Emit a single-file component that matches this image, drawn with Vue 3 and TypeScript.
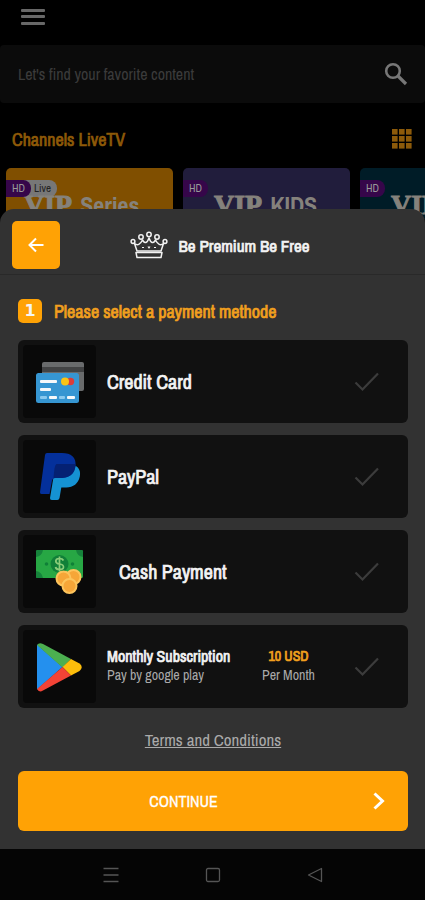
<script setup lang="ts">
import { ref } from 'vue'

type Icon = 'card' | 'paypal' | 'cash' | 'play'

interface Method {
  id: Icon
  title: string
  note?: string
  price?: string
  period?: string
}

interface Channel {
  name: string
  tone: string
  live: boolean
}

const methods: Method[] = [
  { id: 'card', title: 'Credit Card' },
  { id: 'paypal', title: 'PayPal' },
  { id: 'cash', title: 'Cash Payment' },
  {
    id: 'play',
    title: 'Monthly Subscription',
    note: 'Pay by google play',
    price: '10 USD',
    period: 'Per Month',
  },
]

const channels: Channel[] = [
  { name: 'Series', tone: 'amber', live: true },
  { name: 'KIDS', tone: 'violet', live: false },
  { name: '', tone: 'teal', live: false },
]

const selected = ref<Icon | ''>('')
const query = ref('')
</script>

<template>
  <div class="screen">
    <header class="topbar">
      <button class="bare" type="button" aria-label="Menu">
        <svg width="24" height="18" viewBox="0 0 24 18" fill="#686868">
          <rect y="1" width="24" height="3" rx="1" />
          <rect y="7" width="24" height="3" rx="1" />
          <rect y="14" width="24" height="3" rx="1" />
        </svg>
      </button>
    </header>

    <form class="search" @submit.prevent>
      <input v-model="query" type="text" aria-label="Search content" placeholder="Let's find your favorite content" />
      <button class="bare" type="submit" aria-label="Search">
        <svg width="24" height="24" viewBox="0 0 24 24" fill="none" stroke="#777" stroke-width="2.6">
          <circle cx="9" cy="9" r="6.8" />
          <path d="M14 14l8 8" stroke-width="3.2" />
        </svg>
      </button>
    </form>

    <div class="section">
      <h2>Channels LiveTV</h2>
      <button class="bare" type="button" aria-label="Show all channels">
        <svg width="20" height="20" viewBox="0 0 20 20" fill="#8c5a0a">
          <template v-for="r in 3" :key="r">
            <rect v-for="c in 3" :key="c" :x="(c - 1) * 7" :y="(r - 1) * 7" width="5.6" height="5.6" />
          </template>
        </svg>
      </button>
    </div>

    <div class="channels">
      <article v-for="c in channels" :key="c.tone" class="channel" :class="c.tone">
        <div class="tags">
          <span class="hd">HD</span>
          <span v-if="c.live" class="live">Live</span>
        </div>
        <p class="channel-name"><span class="vip">VIP</span><span>{{ c.name }}</span></p>
      </article>
    </div>

    <main class="sheet">
      <div class="sheet-head">
        <button class="back" type="button" aria-label="Back">
          <svg width="18" height="16" viewBox="0 0 18 16" fill="none" stroke="#fff" stroke-width="2">
            <path d="M16.5 8H2.5M9 1.5L2.5 8L9 14.5" />
          </svg>
        </button>
        <div class="premium">
          <svg width="38" height="28" viewBox="0 0 38 28" fill="none" stroke="#f2f2f2" stroke-width="1.5" stroke-linejoin="round">
            <path d="M7 20L4.5 12.5Q9 16 12.5 9Q16 15 19 7Q22 15 25.5 9Q29 16 33.5 12.5L31 20Z" />
            <path d="M6 21.5H32L31 26.5H7Z" />
            <circle cx="3" cy="10.5" r="1.9" />
            <circle cx="11" cy="6" r="2.2" />
            <circle cx="19" cy="3.5" r="2.2" />
            <circle cx="27" cy="6" r="2.2" />
            <circle cx="35" cy="10.5" r="1.9" />
            <path d="M12 16.5h2M18 15.5l1 1.5l1-1.5M24 16.5h2" stroke-width="1.2" />
          </svg>
          <h1>Be Premium Be Free</h1>
        </div>
      </div>

      <form class="payment" @submit.prevent>
        <div class="step">
          <span class="badge">1</span>
          <h2 id="pay-title">Please select a payment methode</h2>
        </div>

        <div class="methods" role="radiogroup" aria-labelledby="pay-title">
          <label v-for="m in methods" :key="m.id" class="method" :class="m.id">
            <input v-model="selected" class="choice" type="radio" name="method" :value="m.id" />
            <span class="picture">
              <svg v-if="m.id === 'card'" width="50" height="50" viewBox="0 0 50 50">
                <rect x="7" y="5" width="42" height="29" rx="2" fill="#696b6c" />
                <rect x="7" y="10" width="42" height="5" fill="#424344" />
                <rect x="1" y="16" width="43" height="30" rx="2.5" fill="#3696d2" />
                <g fill="#f5f8fa">
                  <rect x="5" y="23" width="17" height="3" rx="1" />
                  <rect x="5" y="31" width="11" height="3" rx="1" />
                  <rect x="14" y="39" width="8" height="3" rx="1" />
                  <rect x="32" y="39" width="8" height="3" rx="1" />
                </g>
                <g fill="#8ac9ee">
                  <rect x="5" y="39" width="7" height="3" rx="1" />
                  <rect x="24" y="39" width="6" height="3" rx="1" />
                </g>
                <circle cx="35.5" cy="24.5" r="3.7" fill="#dc3c38" />
                <circle cx="30" cy="24.5" r="4" fill="#fac415" />
              </svg>
              <svg v-else-if="m.id === 'paypal'" width="50" height="50" viewBox="0 0 50 50">
                <path d="M18.5 25L15 46q-.2 2 1.8 2h5.5q1.8 0 2.2-2l1.8-10.5h5c7 0 12-4 13.5-11c1-5-.5-8.5-4-10.5z" fill="#1592d3" />
                <path d="M12 1H27c9 0 14.5 4.5 13.5 12.5C39.5 22 34 26 26 26H20q-2.5 0-3 2.5L14.5 42H6.5Q4.7 42 5 40L10 3q.3-2 2-2z" fill="#04309b" />
                <path d="M21.5 12H40.5q0 13-13.5 14H18.5q1-14 3-14z" fill="#052173" />
              </svg>
              <svg v-else-if="m.id === 'cash'" width="50" height="50" viewBox="0 0 50 50">
                <rect x="1" y="3" width="47" height="28" rx="1.5" fill="#27a744" />
                <path d="M1 10V4.5Q1 3 2.500 3H8Q7 9 1 10zM41 3h5.5Q48 3 48 4.5V10Q42 9 41 3zM1 24Q7 25 8 31H2.5Q1 31 1 29.5z" fill="#16833b" />
                <circle cx="24.5" cy="17" r="9" fill="#108038" />
                <circle cx="11.5" cy="17" r="1.8" fill="#108038" />
                <circle cx="37.5" cy="17" r="1.8" fill="#108038" />
                <path d="M28.5 13.5Q27.5 11.5 24.5 11.5Q20.8 11.5 20.8 14Q20.8 16.5 24.5 17Q28.5 17.5 28.5 20Q28.5 22.5 24.5 22.5Q21 22.5 20.5 20M24.5 9.5v15" fill="none" stroke="#8bcd79" stroke-width="1.7" />
                <g fill="#f6a638" stroke="#fcc45c" stroke-width="2">
                  <circle cx="38.5" cy="30" r="7" />
                  <circle cx="28.5" cy="31.5" r="7" />
                  <circle cx="34.5" cy="39" r="7" />
                </g>
              </svg>
              <svg v-else width="50" height="50" viewBox="0 0 50 50">
                <path d="M2 2.5V47.5L27.5 25z" fill="#2490ee" />
                <path d="M2 3Q4 0 8 2L36 17L27.5 25.5z" fill="#4caf50" />
                <path d="M36 17L44.5 21.5Q49 25 44.5 29L36 33.5L27.5 25z" fill="#fdbd0b" />
                <path d="M2 47Q4 51 8 48.5L36 33.5L27.5 25z" fill="#f34336" />
              </svg>
            </span>
            <span class="words">
              <strong class="name">{{ m.title }}</strong>
              <span v-if="m.note" class="note">{{ m.note }}</span>
            </span>
            <span v-if="m.price" class="cost">
              <strong class="price">{{ m.price }}</strong>
              <span class="note">{{ m.period }}</span>
            </span>
            <svg class="tick" width="26" height="20" viewBox="0 0 26 20" fill="none" stroke="currentColor" stroke-width="2.2">
              <path d="M1.5 10.5L8.5 17.5L24 1.5" />
            </svg>
          </label>
        </div>

        <a class="terms" href="#terms">Terms and Conditions</a>

        <button class="continue" type="submit">
          <span>CONTINUE</span>
          <svg width="12" height="18" viewBox="0 0 12 18" fill="none" stroke="#fff" stroke-width="3">
            <path d="M1.5 1.5L9.5 9L1.5 16.5" />
          </svg>
        </button>
      </form>
    </main>

    <nav class="system" aria-label="System">
      <button class="bare" type="button" aria-label="Recent apps">
        <svg width="16" height="16" viewBox="0 0 16 16" stroke="#555" stroke-width="1.5">
          <path d="M.5 1.5h15M.5 8h15M.5 14.5h15" />
        </svg>
      </button>
      <button class="bare" type="button" aria-label="Home">
        <svg width="16" height="16" viewBox="0 0 16 16" fill="none" stroke="#555" stroke-width="1.3">
          <rect x="1.5" y="1.5" width="13" height="13" rx="1.5" />
        </svg>
      </button>
      <button class="bare" type="button" aria-label="Go back">
        <svg width="16" height="16" viewBox="0 0 16 16" fill="none" stroke="#555" stroke-width="1.3" stroke-linejoin="round">
          <path d="M14.5 1.5V14.5L1.5 8z" />
        </svg>
      </button>
    </nav>
  </div>
</template>

<style>
body {
  background: #000;
}
</style>

<style scoped>
.screen {
  display: flex;
  flex-direction: column;
  min-height: 100vh;
  overflow: hidden;
  background: #000;
  color: #f4f4f4;
  font-family: "Liberation Sans Narrow", "Archivo Narrow", "Arial Narrow", "Liberation Sans", sans-serif;
}

h1,
h2,
p {
  margin: 0;
}

h1,
h2,
.name,
.price {
  font-weight: 400;
  -webkit-text-stroke: 0.7px currentColor;
}

svg {
  display: block;
  flex: none;
}

button,
input {
  font-family: inherit;
}

.bare {
  padding: 0;
  border: 0;
  background: none;
}

.topbar {
  padding: 8px 21px 0;
  height: 37px;
}

.search {
  display: flex;
  align-items: center;
  padding: 0 17px 0 18px;
  height: 58px;
  border-radius: 4px;
  background: #0b0b0b;
}

.search input {
  flex: 1;
  min-width: 0;
  padding: 0;
  border: 0;
  outline: 0;
  background: none;
  color: #777;
  font-size: 16px;
}

.search input::placeholder {
  color: #3b3b3b;
  opacity: 1;
}

.section {
  display: flex;
  align-items: center;
  justify-content: space-between;
  padding: 7px 13px 0 12px;
  height: 58px;
}

.section h2 {
  color: #8f5a08;
  font-size: 18px;
}

.channels {
  display: grid;
  grid-template-columns: repeat(3, 167px);
  gap: 10px;
  padding-left: 6px;
  height: 51px;
}

.channel {
  overflow: hidden;
  border-radius: 5px 5px 0 0;
}

.amber {
  background: #804f00;
}

.violet {
  background: #211d3c;
}

.teal {
  background: #001c27;
}

.tags {
  display: flex;
  margin-top: 12px;
  height: 17px;
  font-size: 11px;
  line-height: 17px;
}

.hd {
  z-index: 1;
  padding: 0 6px;
  border-radius: 0 8px 8px 0;
  background: #36064a;
  color: #999;
}

.live {
  margin-left: -7px;
  padding: 0 6px 0 10px;
  border-radius: 0 8px 8px 0;
  background: #777;
  color: #222;
}

.channel-name {
  display: flex;
  align-items: center;
  gap: 8px;
  padding-left: 31px;
  color: #85827c;
  font-size: 24px;
  font-weight: 700;
  line-height: 16px;
  white-space: nowrap;
}

.amber .channel-name {
  padding-left: 18px;
}

.vip {
  font-family: "Liberation Serif", serif;
  font-size: 28px;
  -webkit-text-stroke: 1px currentColor;
}

.sheet {
  position: relative;
  display: flex;
  flex: 1;
  flex-direction: column;
  margin-top: -10px;
  border-radius: 14px 14px 0 0;
  background: #323232;
}

.sheet-head {
  display: grid;
  grid-template-columns: 48px 1fr;
  align-items: center;
  padding: 12px 12px 5px;
  border-bottom: 1px solid #292929;
}

.back {
  display: flex;
  align-items: center;
  justify-content: center;
  height: 48px;
  border: 0;
  border-radius: 5px;
  background: #ffa205;
}

.premium {
  display: flex;
  align-items: center;
  justify-content: center;
  gap: 11px;
  padding-right: 34px;
}

h1 {
  font-size: 17px;
}

.payment {
  display: flex;
  flex-direction: column;
  padding: 24px 17px 18px 18px;
}

.step {
  display: flex;
  align-items: center;
  gap: 12px;
  height: 24px;
}

.badge {
  width: 24px;
  border-radius: 5px;
  background: #ffa205;
  text-align: center;
  font: 700 16px/24px "DejaVu Sans", sans-serif;
}

.step h2 {
  color: #f2a01e;
  font-size: 18px;
}

.methods {
  display: grid;
  gap: 12px;
  margin-top: 17px;
}

.method {
  position: relative;
  display: flex;
  align-items: center;
  padding: 5px 28px 5px 5px;
  border-radius: 6px;
  background: #111;
}

.choice {
  position: absolute;
  opacity: 0;
}

.picture {
  display: flex;
  align-items: center;
  justify-content: center;
  width: 73px;
  height: 73px;
  border-radius: 4px;
  background: #090909;
}

.words {
  display: flex;
  flex: 1;
  flex-direction: column;
  padding-left: 11px;
}

.cash .words {
  padding-left: 23px;
}

.name {
  font-size: 20px;
  line-height: 22px;
}

.play .name {
  font-size: 16px;
  line-height: 20px;
}

.play .words,
.cost {
  padding-bottom: 4px;
}

.note {
  color: #aaa;
  font-size: 14px;
  line-height: 18px;
}

.cost {
  display: flex;
  flex-direction: column;
  align-items: center;
  margin-right: 39px;
}

.price {
  color: #f2a01e;
  font-size: 14px;
  line-height: 20px;
}

.tick {
  color: #3c3c3c;
}

.choice:checked ~ .tick {
  color: #ffa205;
}

.choice:focus-visible ~ .tick {
  outline: 1px solid #ffa205;
}

.terms {
  align-self: center;
  margin: 21px 0;
  color: #aaa;
  font-size: 17px;
  line-height: 21px;
}

.continue {
  display: flex;
  align-items: center;
  padding: 0 23px 0 0;
  height: 60px;
  border: 0;
  border-radius: 6px;
  background: #ffa205;
  color: #fff;
  font-size: 16px;
  -webkit-text-stroke: 0.3px currentColor;
}

.continue span {
  flex: 1;
  padding-right: 24px;
}

.system {
  display: flex;
  align-items: center;
  justify-content: center;
  gap: 86px;
  height: 51px;
  background: #050505;
}
</style>
